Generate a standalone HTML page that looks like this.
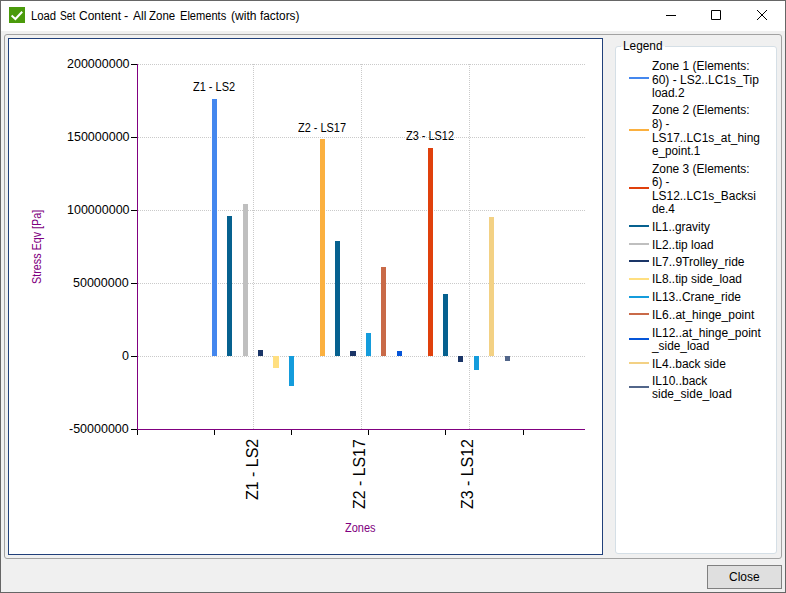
<!DOCTYPE html>
<html><head><meta charset="utf-8"><title>Load Set Content</title>
<style>
html,body{margin:0;padding:0}
body{width:786px;height:593px;overflow:hidden;background:#f0f0f0;position:relative;font-family:"Liberation Sans",sans-serif}
.t{position:absolute;white-space:pre;transform-origin:0 0;display:block}
.r{position:absolute}
.gh{position:absolute;left:138px;width:447px;height:1px;background:repeating-linear-gradient(90deg,#cacaca 0 1px,transparent 1px 2px)}
.gv{position:absolute;top:64px;height:365px;width:1px;background:repeating-linear-gradient(180deg,#cacaca 0 1px,transparent 1px 2px)}
#win{position:absolute;left:0;top:0;width:784px;height:591px;border:1px solid #666}
#title{position:absolute;left:1px;top:1px;width:784px;height:30px;background:#fff}
#gb{position:absolute;left:4px;top:34px;width:776px;height:523px;border:1px solid #a2a2a2;border-radius:3px}
#chart{position:absolute;left:8px;top:38px;width:593px;height:515px;border:1px solid #21407a;background:#fff}
#lgb{position:absolute;left:615px;top:46px;width:160px;height:506px;border:1px solid #d5dfe6;border-radius:3px;background:#fff}
#lgp{position:absolute;left:621px;top:46px;width:44px;height:1px;background:#f6f6f6}
#btn{position:absolute;left:707px;top:565px;width:73px;height:22px;border:1px solid #808080;background:#dfdfdf}
#ico{position:absolute;left:9px;top:7px;width:16px;height:16px;background:#4a9a0b}
</style></head><body>
<div id="title"></div>
<div id="ico"><svg width="16" height="16" viewBox="0 0 16 16"><path d="M2.6 8.6 L6.4 12 L13.2 4.8" fill="none" stroke="#fff" stroke-width="2"/></svg></div>
<svg style="position:absolute;left:660px;top:5px" width="115" height="20" viewBox="0 0 115 20"><path d="M6 10.5 H16 M51.5 5.5 H60.5 V14.5 H51.5 Z M97 5 L107 15 M107 5 L97 15" fill="none" stroke="#000" stroke-width="1"/></svg>
<div id="gb"></div>
<div id="chart"></div>
<div id="lgb"></div>
<div id="lgp"></div>
<div id="btn"></div>
<span class="t " style="left:30.80px;top:8.87px;font-size:12.5px;line-height:15.00px;color:#000;transform:scaleX(0.9045)">Load </span>
<span class="t " style="left:59.70px;top:8.87px;font-size:12.5px;line-height:15.00px;color:#000;transform:scaleX(0.8160)">Set </span>
<span class="t " style="left:78.80px;top:8.87px;font-size:12.5px;line-height:15.00px;color:#000;transform:scaleX(0.9600)">Content </span>
<span class="t " style="left:124.30px;top:8.87px;font-size:12.5px;line-height:15.00px;color:#000;transform:scaleX(1.0182)">- </span>
<span class="t " style="left:132.50px;top:8.87px;font-size:12.5px;line-height:15.00px;color:#000;transform:scaleX(0.9658)">All </span>
<span class="t " style="left:149.30px;top:8.87px;font-size:12.5px;line-height:15.00px;color:#000;transform:scaleX(0.9193)">Zone </span>
<span class="t " style="left:180.20px;top:8.87px;font-size:12.5px;line-height:15.00px;color:#000;transform:scaleX(0.8863)">Elements </span>
<span class="t " style="left:230.80px;top:8.87px;font-size:12.5px;line-height:15.00px;color:#000;transform:scaleX(0.9668)">(with </span>
<span class="t " style="left:260.10px;top:8.87px;font-size:12.5px;line-height:15.00px;color:#000;transform:scaleX(0.9465)">factors) </span>
<span class="t " style="left:66.50px;top:56.22px;font-size:13.5px;line-height:16.20px;color:#000;transform:scaleX(0.9257)">200000000</span>
<div class="r" style="left:131px;top:64px;width:6px;height:1px;background:#000"></div>
<span class="t " style="left:66.50px;top:129.22px;font-size:13.5px;line-height:16.20px;color:#000;transform:scaleX(0.9257)">150000000</span>
<div class="r" style="left:131px;top:137px;width:6px;height:1px;background:#000"></div>
<span class="t " style="left:66.50px;top:202.22px;font-size:13.5px;line-height:16.20px;color:#000;transform:scaleX(0.9257)">100000000</span>
<div class="r" style="left:131px;top:210px;width:6px;height:1px;background:#000"></div>
<span class="t " style="left:73.44px;top:275.22px;font-size:13.5px;line-height:16.20px;color:#000;transform:scaleX(0.9257)">50000000</span>
<div class="r" style="left:131px;top:283px;width:6px;height:1px;background:#000"></div>
<span class="t " style="left:122.16px;top:348.22px;font-size:13.5px;line-height:16.20px;color:#000;transform:scaleX(0.9257)">0</span>
<div class="r" style="left:131px;top:356px;width:6px;height:1px;background:#000"></div>
<span class="t " style="left:69.39px;top:421.22px;font-size:13.5px;line-height:16.20px;color:#000;transform:scaleX(0.9257)">-50000000</span>
<div class="r" style="left:131px;top:429px;width:6px;height:1px;background:#000"></div>
<div class="gh" style="top:64px"></div>
<div class="gh" style="top:137px"></div>
<div class="gh" style="top:210px"></div>
<div class="gh" style="top:283px"></div>
<div class="gh" style="top:356px"></div>
<div class="gv" style="left:253px"></div>
<div class="gv" style="left:361px"></div>
<div class="gv" style="left:469px"></div>
<div class="r" style="left:137px;top:64px;width:1px;height:366px;background:#800080"></div>
<div class="r" style="left:137px;top:429px;width:448px;height:1px;background:#800080"></div>
<div class="r" style="left:137px;top:430px;width:1px;height:5px;background:#000"></div>
<div class="r" style="left:214px;top:430px;width:1px;height:5px;background:#000"></div>
<div class="r" style="left:291px;top:430px;width:1px;height:5px;background:#000"></div>
<div class="r" style="left:368px;top:430px;width:1px;height:5px;background:#000"></div>
<div class="r" style="left:445px;top:430px;width:1px;height:5px;background:#000"></div>
<div class="r" style="left:523px;top:430px;width:1px;height:5px;background:#000"></div>
<div class="r" style="left:212px;top:99px;width:5px;height:257px;background:#4487ee"></div>
<div class="r" style="left:227px;top:216px;width:5px;height:140px;background:#06618f"></div>
<div class="r" style="left:243px;top:204px;width:5px;height:152px;background:#bfbfbf"></div>
<div class="r" style="left:258px;top:350px;width:5px;height:6px;background:#1a3567"></div>
<div class="r" style="left:273px;top:356px;width:6px;height:12px;background:#ffdf80"></div>
<div class="r" style="left:289px;top:356px;width:5px;height:30px;background:#149cdc"></div>
<div class="r" style="left:320px;top:139px;width:5px;height:217px;background:#fbb03f"></div>
<div class="r" style="left:335px;top:241px;width:5px;height:115px;background:#06618f"></div>
<div class="r" style="left:350px;top:351px;width:6px;height:5px;background:#1a3567"></div>
<div class="r" style="left:366px;top:333px;width:5px;height:23px;background:#149cdc"></div>
<div class="r" style="left:381px;top:267px;width:5px;height:89px;background:#c96a48"></div>
<div class="r" style="left:397px;top:351px;width:5px;height:5px;background:#0555d8"></div>
<div class="r" style="left:428px;top:148px;width:5px;height:208px;background:#e0400c"></div>
<div class="r" style="left:443px;top:294px;width:5px;height:62px;background:#06618f"></div>
<div class="r" style="left:458px;top:356px;width:5px;height:6px;background:#1a3567"></div>
<div class="r" style="left:474px;top:356px;width:5px;height:14px;background:#149cdc"></div>
<div class="r" style="left:489px;top:217px;width:5px;height:139px;background:#f3d184"></div>
<div class="r" style="left:505px;top:356px;width:5px;height:5px;background:#52668a"></div>
<span class="t " style="left:193.00px;top:80.17px;font-size:12.5px;line-height:15.00px;color:#000;transform:scaleX(0.8773)">Z1 - LS2</span>
<span class="t " style="left:298.00px;top:121.17px;font-size:12.5px;line-height:15.00px;color:#000;transform:scaleX(0.8747)">Z2 - LS17</span>
<span class="t " style="left:406.00px;top:129.17px;font-size:12.5px;line-height:15.00px;color:#000;transform:scaleX(0.8747)">Z3 - LS12</span>
<span class="t " style="left:344.90px;top:520.64px;font-size:12px;line-height:14.40px;color:#800080;transform:scaleX(0.9169)">Zones</span>
<span class="t" style="left:243.85px;top:500.00px;font-size:16.5px;line-height:16.5px;color:#000;transform:rotate(-90deg) scale(0.9676,0.9988)">Z1 - LS2</span>
<span class="t" style="left:351.17px;top:508.80px;font-size:16.5px;line-height:16.5px;color:#000;transform:rotate(-90deg) scale(0.9628,0.9904)">Z2 - LS17</span>
<span class="t" style="left:459.17px;top:508.80px;font-size:16.5px;line-height:16.5px;color:#000;transform:rotate(-90deg) scale(0.9655,0.9904)">Z3 - LS12</span>
<span class="t" style="left:30.96px;top:283.70px;font-size:11.5px;line-height:11.5px;color:#800080;transform:rotate(-90deg) scale(0.9363,1.0930)">Stress Eqv [Pa]</span>
<span class="t " style="left:651.80px;top:59.34px;font-size:12px;line-height:14.40px;color:#000;transform:scaleX(0.9959)">Zone 1 (Elements:</span>
<span class="t " style="left:651.80px;top:72.74px;font-size:12px;line-height:14.40px;color:#000;transform:scaleX(0.9991)">60) - LS2..LC1s_Tip</span>
<span class="t " style="left:651.80px;top:86.04px;font-size:12px;line-height:14.40px;color:#000;transform:scaleX(0.9954)">load.2</span>
<div class="r" style="left:629px;top:77px;width:20px;height:2px;background:#4487ee"></div>
<span class="t " style="left:651.80px;top:103.04px;font-size:12px;line-height:14.40px;color:#000;transform:scaleX(0.9959)">Zone 2 (Elements:</span>
<span class="t " style="left:651.80px;top:116.64px;font-size:12px;line-height:14.40px;color:#000;transform:scaleX(0.9667)">8) -</span>
<span class="t " style="left:651.80px;top:130.74px;font-size:12px;line-height:14.40px;color:#000;transform:scaleX(0.9922)">LS17..LC1s_at_hing</span>
<span class="t " style="left:651.80px;top:143.74px;font-size:12px;line-height:14.40px;color:#000;transform:scaleX(0.9782)">e_point.1</span>
<div class="r" style="left:629px;top:129px;width:20px;height:2px;background:#fbb03f"></div>
<span class="t " style="left:651.80px;top:162.04px;font-size:12px;line-height:14.40px;color:#000;transform:scaleX(0.9959)">Zone 3 (Elements:</span>
<span class="t " style="left:651.80px;top:174.94px;font-size:12px;line-height:14.40px;color:#000;transform:scaleX(0.9667)">6) -</span>
<span class="t " style="left:651.80px;top:189.34px;font-size:12px;line-height:14.40px;color:#000;transform:scaleX(0.9919)">LS12..LC1s_Backsi</span>
<span class="t " style="left:651.80px;top:201.94px;font-size:12px;line-height:14.40px;color:#000;transform:scaleX(0.9797)">de.4</span>
<div class="r" style="left:629px;top:187px;width:20px;height:2px;background:#e0400c"></div>
<span class="t " style="left:651.80px;top:219.84px;font-size:12px;line-height:14.40px;color:#000;transform:scaleX(0.9855)">IL1..gravity</span>
<div class="r" style="left:629px;top:225px;width:20px;height:2px;background:#06618f"></div>
<span class="t " style="left:651.80px;top:237.54px;font-size:12px;line-height:14.40px;color:#000;transform:scaleX(0.9919)">IL2..tip load</span>
<div class="r" style="left:629px;top:243px;width:20px;height:2px;background:#bfbfbf"></div>
<span class="t " style="left:651.80px;top:255.04px;font-size:12px;line-height:14.40px;color:#000;transform:scaleX(1.0027)">IL7..9Trolley_ride</span>
<div class="r" style="left:629px;top:260px;width:20px;height:2px;background:#1a3567"></div>
<span class="t " style="left:651.80px;top:272.34px;font-size:12px;line-height:14.40px;color:#000;transform:scaleX(0.9906)">IL8..tip side_load</span>
<div class="r" style="left:629px;top:278px;width:20px;height:2px;background:#ffdf80"></div>
<span class="t " style="left:651.80px;top:289.84px;font-size:12px;line-height:14.40px;color:#000;transform:scaleX(0.9958)">IL13..Crane_ride</span>
<div class="r" style="left:629px;top:296px;width:20px;height:2px;background:#149cdc"></div>
<span class="t " style="left:651.80px;top:307.74px;font-size:12px;line-height:14.40px;color:#000;transform:scaleX(1.0017)">IL6..at_hinge_point</span>
<div class="r" style="left:629px;top:313px;width:20px;height:2px;background:#c96a48"></div>
<span class="t " style="left:651.80px;top:325.64px;font-size:12px;line-height:14.40px;color:#000;transform:scaleX(1.0005)">IL12..at_hinge_point</span>
<span class="t " style="left:652.05px;top:338.64px;font-size:12px;line-height:14.40px;color:#000;transform:scaleX(0.9871)">_side_load</span>
<div class="r" style="left:629px;top:338px;width:20px;height:2px;background:#0555d8"></div>
<span class="t " style="left:651.80px;top:356.54px;font-size:12px;line-height:14.40px;color:#000;transform:scaleX(0.9973)">IL4..back side</span>
<div class="r" style="left:629px;top:362px;width:20px;height:2px;background:#f3d184"></div>
<span class="t " style="left:651.80px;top:373.84px;font-size:12px;line-height:14.40px;color:#000;transform:scaleX(0.9982)">IL10..back</span>
<span class="t " style="left:651.80px;top:387.44px;font-size:12px;line-height:14.40px;color:#000;transform:scaleX(0.9972)">side_side_load</span>
<div class="r" style="left:629px;top:386px;width:20px;height:2px;background:#52668a"></div>
<span class="t " style="left:622.80px;top:39.07px;font-size:12.5px;line-height:15.00px;color:#000;transform:scaleX(0.9461)">Legend</span>
<span class="t " style="left:729.30px;top:569.64px;font-size:12px;line-height:14.40px;color:#000;transform:scaleX(0.9959)">Close</span>
<div id="win"></div>
</body></html>
